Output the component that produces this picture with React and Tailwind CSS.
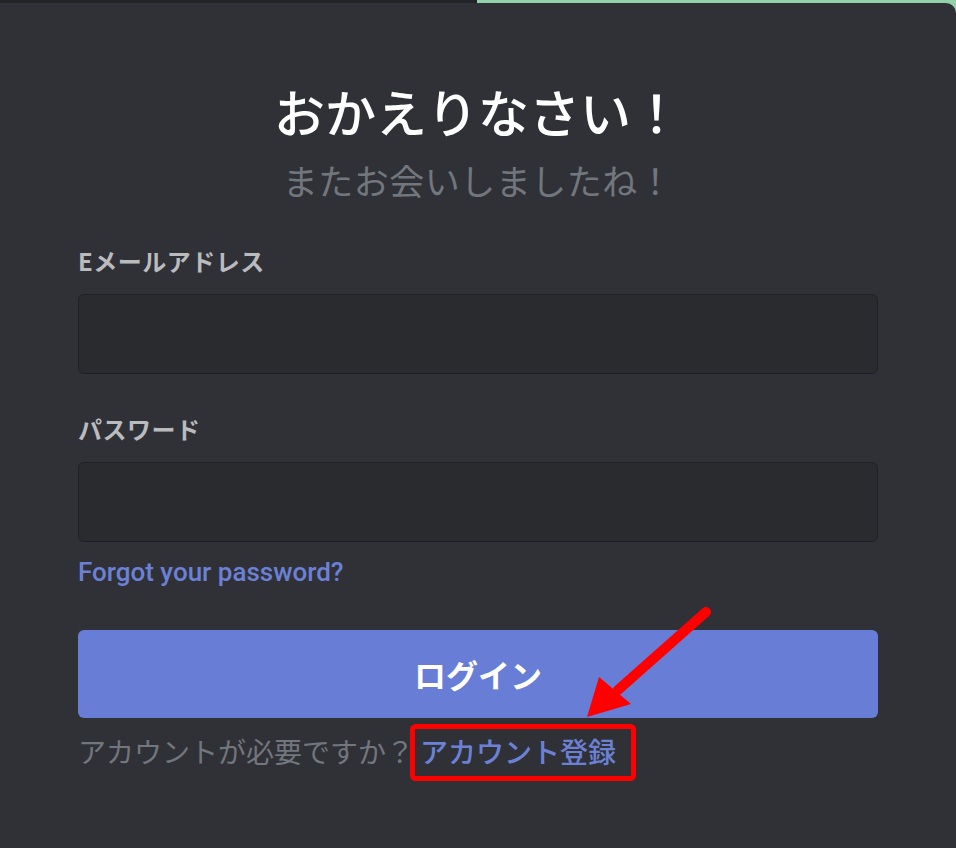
import React from "react";

const jp = "font-['Noto_Sans_CJK_JP','Noto_Sans',sans-serif]";

const Field = ({ label, type }) => (
  <div className="flex flex-col">
    <label className={`${jp} text-[24px] leading-[28px] tracking-[0.5px] font-bold text-[#b9bbbe]`}>
      {label}
    </label>
    <input
      type={type}
      className="mt-[19px] h-[80px] w-full rounded-[6px] border border-[#1f2124] bg-[#292b2f] outline-none"
    />
  </div>
);

const App = () => {
  return (
    <div className="w-[956px] h-[848px] overflow-hidden bg-[linear-gradient(to_right,#212327_477px,#93d1aa_477px)]">
      <div className="relative mt-[3px] h-[845px] rounded-tr-[10px] bg-[#2f3136] px-[78px] pt-[77px]">
        {/* heading */}
        <h1 className={`${jp} text-center text-[51px] leading-[62px] font-medium text-white`}>
          おかえりなさい！
        </h1>
        <p className={`${jp} mt-[18px] text-center text-[35px] leading-[40px] tracking-[0.5px] text-[#72767d]`}>
          またお会いしましたね！
        </p>

        {/* form */}
        <div className="mt-[47px]">
          <Field label="Eメールアドレス" type="email" />
        </div>
        <div className="mt-[41px]">
          <Field label="パスワード" type="password" />
        </div>

        <a className="mt-[14px] block font-['Roboto',sans-serif] text-[26px] leading-[32px] font-medium text-[#6c81d6]">
          Forgot your password?
        </a>

        <button className={`${jp} mt-[42px] flex h-[88px] w-full items-center justify-center rounded-[6px] bg-[#687dd6] text-[32px] font-bold text-white`}>
          ログイン
        </button>

        <p className={`${jp} mt-[15px] text-[28px] leading-[36px] text-[#72767d]`}>
          アカウントが必要ですか？
          <a className="ml-[6px] font-medium text-[#6c81d6]">アカウント登録</a>
        </p>

        {/* annotation overlay */}
        <svg
          className="pointer-events-none absolute left-0 top-0"
          width="956"
          height="845"
          viewBox="0 3 956 845"
        >
          <rect
            x="412.5"
            y="726.5"
            width="221"
            height="52"
            rx="3"
            fill="none"
            stroke="#ff0000"
            strokeWidth="5"
          />
          <line
            x1="706"
            y1="612"
            x2="618"
            y2="690"
            stroke="#ff0000"
            strokeWidth="10"
            strokeLinecap="round"
          />
          <polygon points="587,717 599,677 631,704" fill="#ff0000" />
        </svg>
      </div>
    </div>
  );
};

export default App;
